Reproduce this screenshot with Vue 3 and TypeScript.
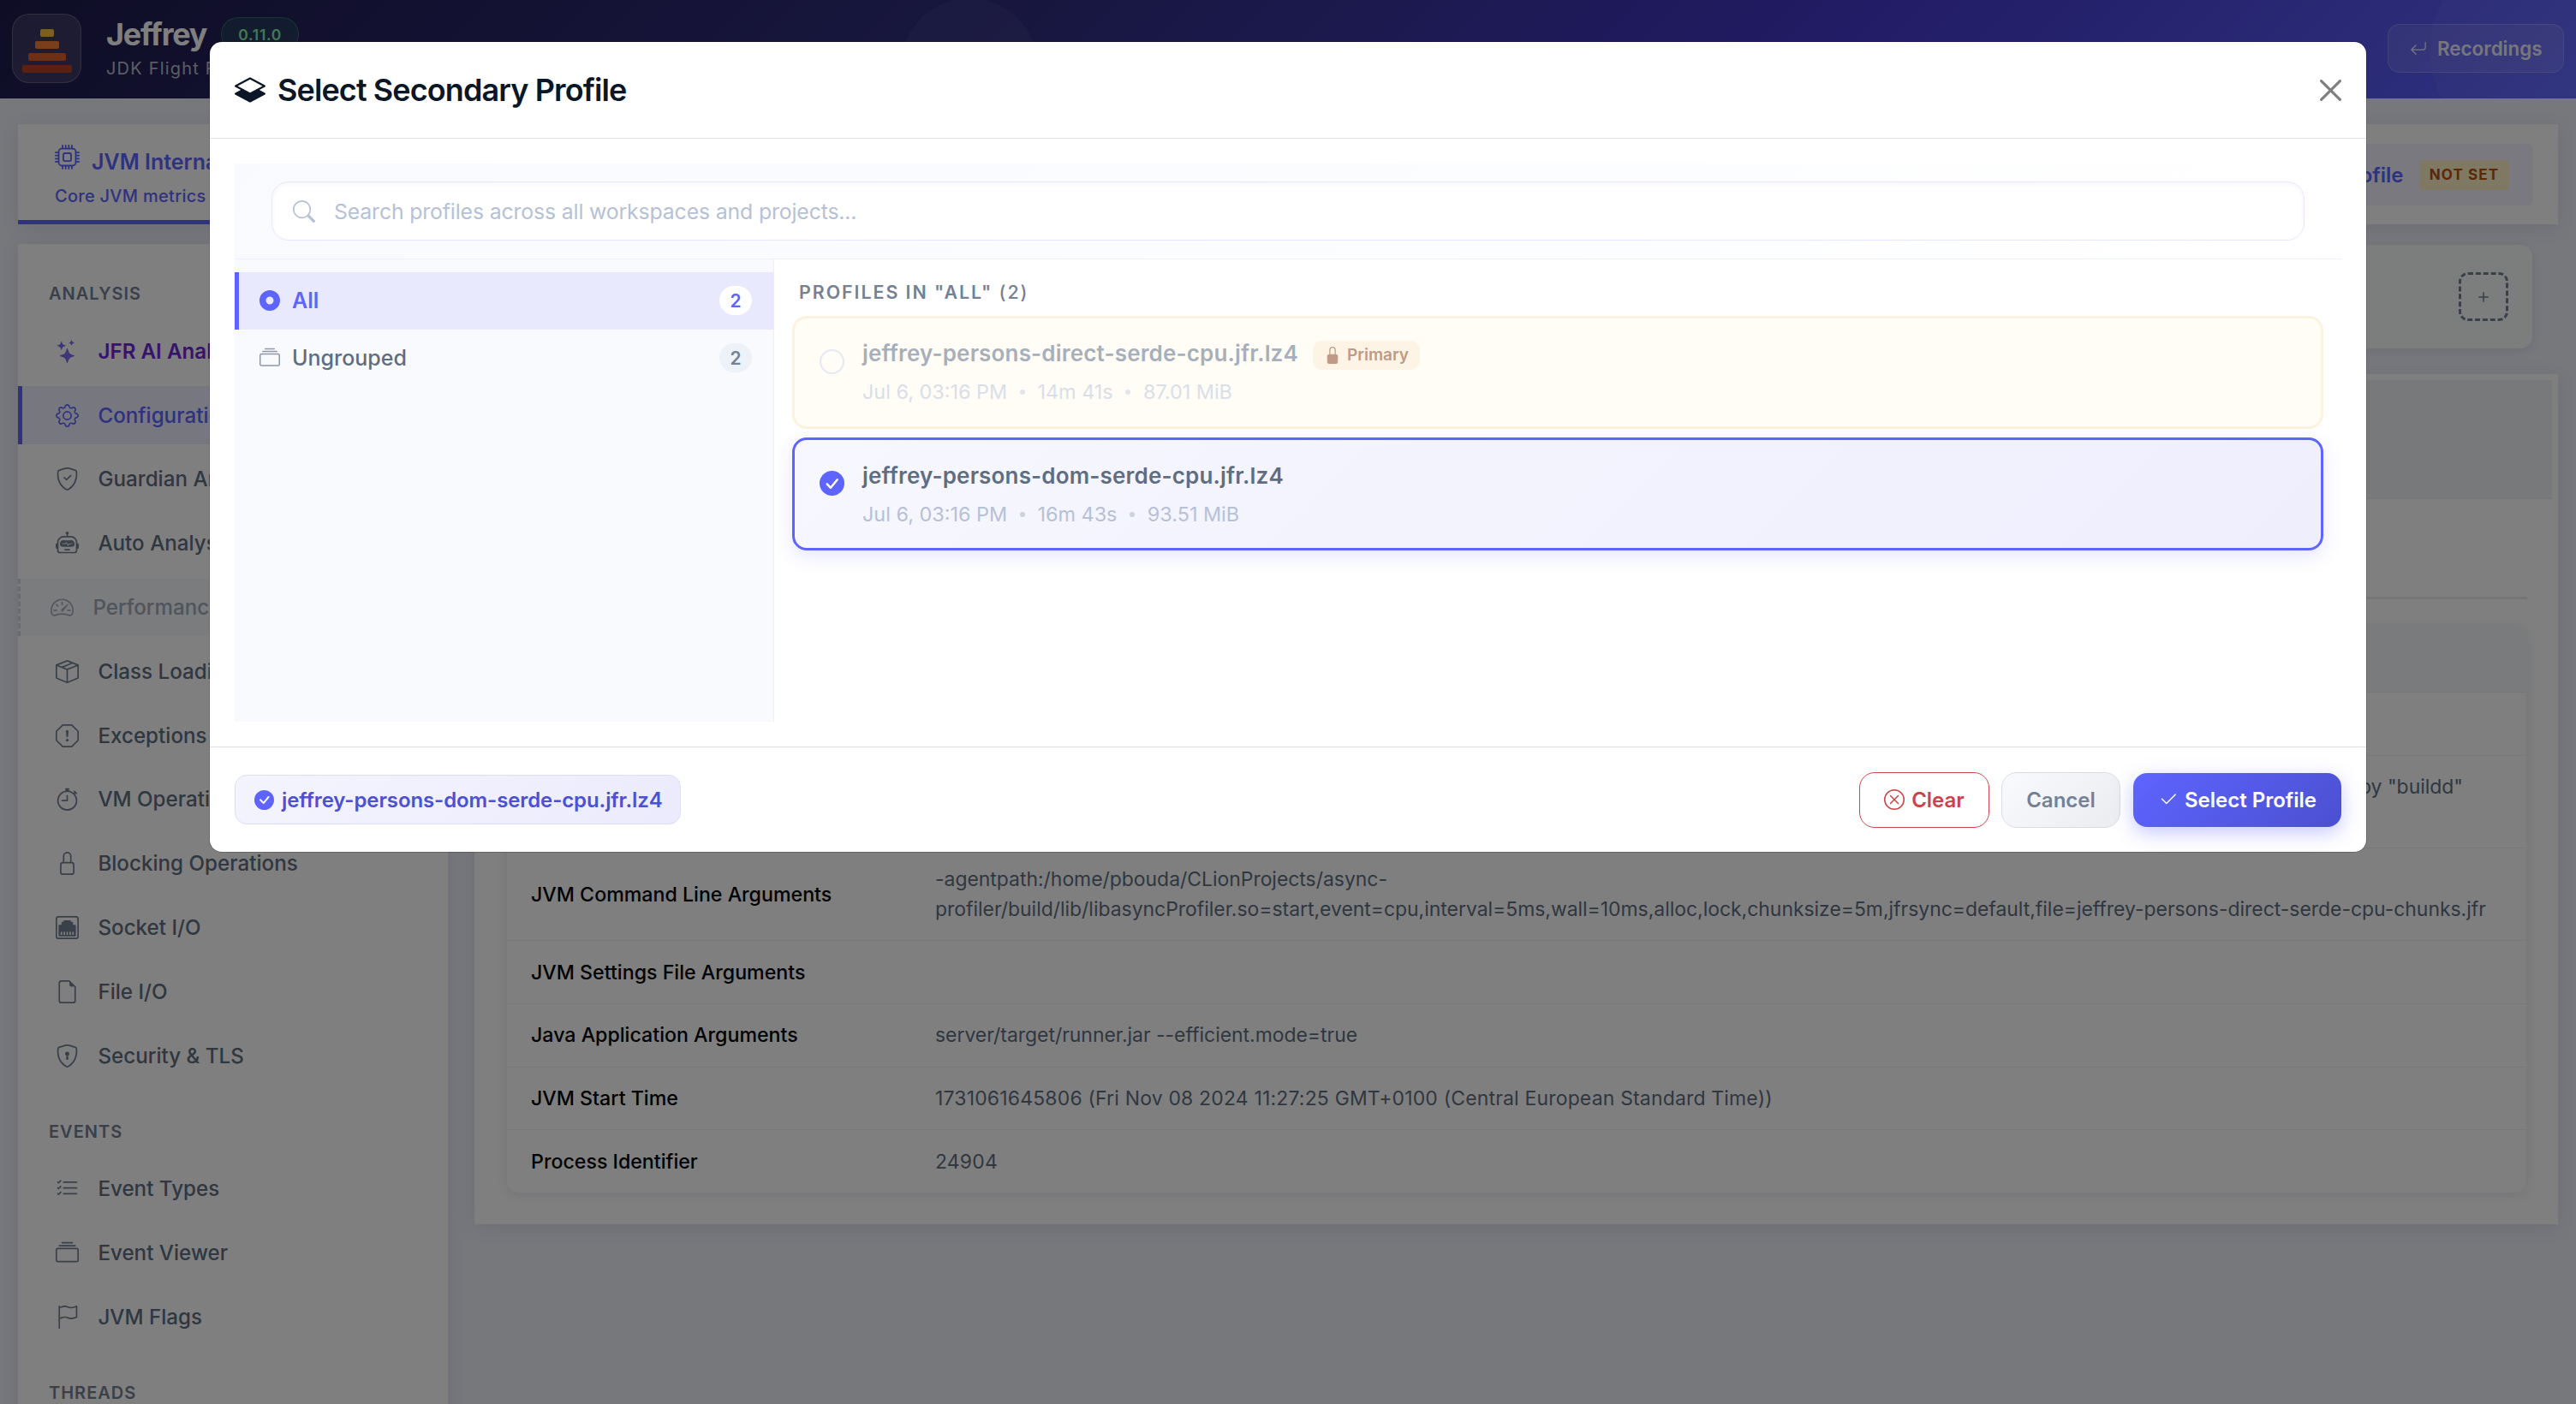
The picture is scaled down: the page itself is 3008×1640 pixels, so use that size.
<script setup lang="ts">
import { ref } from 'vue'

interface NavItem {
  label: string
  icon: string
  state?: 'ai' | 'active' | 'disabled'
}

interface NavGroup {
  title: string
  items: NavItem[]
}

interface Profile {
  name: string
  meta: string[]
  primary: boolean
  selected: boolean
}

const SHIELD =
  'M5.338 1.59a61 61 0 0 0-2.837.856.48.48 0 0 0-.328.39c-.554 4.157.726 7.19 2.253 9.188a10.7 10.7 0 0 0 2.287 2.233c.346.244.652.42.893.533q.18.085.293.118a1 1 0 0 0 .101.025 1 1 0 0 0 .1-.025q.114-.034.294-.118c.24-.113.547-.29.893-.533a10.7 10.7 0 0 0 2.287-2.233c1.527-1.997 2.807-5.031 2.253-9.188a.48.48 0 0 0-.328-.39c-.651-.213-1.75-.56-2.837-.855C9.552 1.29 8.531 1.067 8 1.067c-.53 0-1.552.223-2.662.524zM5.072.56C6.157.265 7.31 0 8 0s1.843.265 2.928.56c1.11.3 2.229.655 2.887.87a1.54 1.54 0 0 1 1.044 1.262c.596 4.477-.787 7.795-2.465 9.99a11.8 11.8 0 0 1-2.517 2.453 7 7 0 0 1-1.048.625c-.28.132-.581.24-.829.24s-.548-.108-.829-.24a7 7 0 0 1-1.048-.625 11.8 11.8 0 0 1-2.517-2.453C1.928 10.487.545 7.169 1.141 2.692A1.54 1.54 0 0 1 2.185 1.43 63 63 0 0 1 5.072.56'

const icons: Record<string, string[]> = {
  layers: [
    'M8.235 1.559a.5.5 0 0 0-.47 0l-7.5 4a.5.5 0 0 0 0 .882L3.188 8 .264 9.559a.5.5 0 0 0 0 .882l7.5 4a.5.5 0 0 0 .47 0l7.5-4a.5.5 0 0 0 0-.882L12.813 8l2.922-1.559a.5.5 0 0 0 0-.882zM8 9.433 1.562 6 8 2.567 14.438 6z',
  ],
  search: [
    'M11.742 10.344a6.5 6.5 0 1 0-1.397 1.398h-.001q.044.06.098.115l3.85 3.85a1 1 0 0 0 1.415-1.414l-3.85-3.85a1 1 0 0 0-.115-.1zM12 6.5a5.5 5.5 0 1 1-11 0 5.5 5.5 0 0 1 11 0',
  ],
  record: ['M16 8A8 8 0 1 1 0 8a8 8 0 0 1 16 0m-8 3a3 3 0 1 0 0-6 3 3 0 0 0 0 6'],
  collection: [
    'M2.5 3.5a.5.5 0 0 1 0-1h11a.5.5 0 0 1 0 1zm2-2a.5.5 0 0 1 0-1h7a.5.5 0 0 1 0 1zM0 13a1.5 1.5 0 0 0 1.5 1.5h13A1.5 1.5 0 0 0 16 13V6a1.5 1.5 0 0 0-1.5-1.5h-13A1.5 1.5 0 0 0 0 6zm1.5.5A.5.5 0 0 1 1 13V6a.5.5 0 0 1 .5-.5h13a.5.5 0 0 1 .5.5v7a.5.5 0 0 1-.5.5z',
  ],
  lockFill: [
    'M8 1a2 2 0 0 1 2 2v4H6V3a2 2 0 0 1 2-2m3 6V3a3 3 0 0 0-6 0v4a2 2 0 0 0-2 2v5a2 2 0 0 0 2 2h6a2 2 0 0 0 2-2V9a2 2 0 0 0-2-2',
  ],
  lock: [
    'M8 1a2 2 0 0 1 2 2v4H6V3a2 2 0 0 1 2-2m3 6V3a3 3 0 0 0-6 0v4a2 2 0 0 0-2 2v5a2 2 0 0 0 2 2h6a2 2 0 0 0 2-2V9a2 2 0 0 0-2-2M5 8h6a1 1 0 0 1 1 1v5a1 1 0 0 1-1 1H5a1 1 0 0 1-1-1V9a1 1 0 0 1 1-1',
  ],
  checkFill: [
    'M16 8A8 8 0 1 1 0 8a8 8 0 0 1 16 0m-3.97-3.03a.75.75 0 0 0-1.08.022L7.477 9.417 5.384 7.323a.75.75 0 0 0-1.06 1.06L6.97 11.03a.75.75 0 0 0 1.079-.02l3.992-4.99a.75.75 0 0 0-.01-1.05z',
  ],
  xCircle: [
    'M8 15A7 7 0 1 1 8 1a7 7 0 0 1 0 14m0 1A8 8 0 1 0 8 0a8 8 0 0 0 0 16',
    'M4.646 4.646a.5.5 0 0 1 .708 0L8 7.293l2.646-2.647a.5.5 0 0 1 .708.708L8.707 8l2.647 2.646a.5.5 0 0 1-.708.708L8 8.707l-2.646 2.647a.5.5 0 0 1-.708-.708L7.293 8 4.646 5.354a.5.5 0 0 1 0-.708',
  ],
  check: [
    'M13.854 3.646a.5.5 0 0 1 0 .708l-7 7a.5.5 0 0 1-.708 0l-3.5-3.5a.5.5 0 1 1 .708-.708L6.5 10.293l6.646-6.647a.5.5 0 0 1 .708 0',
  ],
  returnLeft: [
    'M14.5 1.5a.5.5 0 0 1 .5.5v4.8a2.5 2.5 0 0 1-2.5 2.5H2.707l3.347 3.346a.5.5 0 0 1-.708.708l-4.2-4.2a.5.5 0 0 1 0-.708l4-4a.5.5 0 1 1 .708.708L2.707 8.3H12.5A1.5 1.5 0 0 0 14 6.8V2a.5.5 0 0 1 .5-.5',
  ],
  close: [
    'M.293.293a1 1 0 0 1 1.414 0L8 6.586 14.293.293a1 1 0 1 1 1.414 1.414L9.414 8l6.293 6.293a1 1 0 0 1-1.414 1.414L8 9.414l-6.293 6.293a1 1 0 0 1-1.414-1.414L6.586 8 .293 1.707a1 1 0 0 1 0-1.414',
  ],
  plus: [
    'M8 4a.5.5 0 0 1 .5.5v3h3a.5.5 0 0 1 0 1h-3v3a.5.5 0 0 1-1 0v-3h-3a.5.5 0 0 1 0-1h3v-3A.5.5 0 0 1 8 4',
  ],
  cpu: [
    'M5 0a.5.5 0 0 1 .5.5V2h1V.5a.5.5 0 0 1 1 0V2h1V.5a.5.5 0 0 1 1 0V2h1V.5a.5.5 0 0 1 1 0V2A2.5 2.5 0 0 1 14 4.5h1.5a.5.5 0 0 1 0 1H14v1h1.5a.5.5 0 0 1 0 1H14v1h1.5a.5.5 0 0 1 0 1H14v1h1.5a.5.5 0 0 1 0 1H14a2.5 2.5 0 0 1-2.5 2.5v1.5a.5.5 0 0 1-1 0V14h-1v1.5a.5.5 0 0 1-1 0V14h-1v1.5a.5.5 0 0 1-1 0V14h-1v1.5a.5.5 0 0 1-1 0V14A2.5 2.5 0 0 1 2 11.5H.5a.5.5 0 0 1 0-1H2v-1H.5a.5.5 0 0 1 0-1H2v-1H.5a.5.5 0 0 1 0-1H2v-1H.5a.5.5 0 0 1 0-1H2A2.5 2.5 0 0 1 4.5 2V.5A.5.5 0 0 1 5 0m-.5 3A1.5 1.5 0 0 0 3 4.5v7A1.5 1.5 0 0 0 4.5 13h7a1.5 1.5 0 0 0 1.5-1.5v-7A1.5 1.5 0 0 0 11.5 3zM5 6.5A1.5 1.5 0 0 1 6.5 5h3A1.5 1.5 0 0 1 11 6.5v3A1.5 1.5 0 0 1 9.5 11h-3A1.5 1.5 0 0 1 5 9.5zM6.5 6a.5.5 0 0 0-.5.5v3a.5.5 0 0 0 .5.5h3a.5.5 0 0 0 .5-.5v-3a.5.5 0 0 0-.5-.5z',
  ],
  stars: [
    'M7.657 6.247c.11-.33.576-.33.686 0l.645 1.937a2.89 2.89 0 0 0 1.829 1.828l1.936.645c.33.11.33.576 0 .686l-1.937.645a2.89 2.89 0 0 0-1.828 1.829l-.645 1.936a.361.361 0 0 1-.686 0l-.645-1.937a2.89 2.89 0 0 0-1.828-1.828l-1.937-.645a.361.361 0 0 1 0-.686l1.937-.645a2.89 2.89 0 0 0 1.828-1.828zM3.794 1.148a.217.217 0 0 1 .412 0l.387 1.162c.173.518.579.924 1.097 1.097l1.162.387a.217.217 0 0 1 0 .412l-1.162.387A1.73 1.73 0 0 0 4.593 5.69l-.387 1.162a.217.217 0 0 1-.412 0L3.407 5.69A1.73 1.73 0 0 0 2.31 4.593l-1.162-.387a.217.217 0 0 1 0-.412l1.162-.387A1.73 1.73 0 0 0 3.407 2.31zM10.863.099a.145.145 0 0 1 .274 0l.258.774c.115.346.386.617.732.732l.774.258a.145.145 0 0 1 0 .274l-.774.258a1.16 1.16 0 0 0-.732.732l-.258.774a.145.145 0 0 1-.274 0l-.258-.774a1.16 1.16 0 0 0-.732-.732L9.1 2.137a.145.145 0 0 1 0-.274l.774-.258c.346-.115.617-.386.732-.732z',
  ],
  gear: [
    'M8 4.754a3.246 3.246 0 1 0 0 6.492 3.246 3.246 0 0 0 0-6.492M5.754 8a2.246 2.246 0 1 1 4.492 0 2.246 2.246 0 0 1-4.492 0',
    'M9.796 1.343c-.527-1.79-3.065-1.79-3.592 0l-.094.319a.873.873 0 0 1-1.255.52l-.292-.16c-1.64-.892-3.433.902-2.54 2.541l.159.292a.873.873 0 0 1-.52 1.255l-.319.094c-1.79.527-1.79 3.065 0 3.592l.319.094a.873.873 0 0 1 .52 1.255l-.16.292c-.892 1.64.901 3.434 2.541 2.54l.292-.159a.873.873 0 0 1 1.255.52l.094.319c.527 1.79 3.065 1.79 3.592 0l.094-.319a.873.873 0 0 1 1.255-.52l.292.16c1.64.893 3.434-.902 2.54-2.541l-.159-.292a.873.873 0 0 1 .52-1.255l.319-.094c1.79-.527 1.79-3.065 0-3.592l-.319-.094a.873.873 0 0 1-.52-1.255l.16-.292c.893-1.64-.902-3.433-2.541-2.54l-.292.159a.873.873 0 0 1-1.255-.52zm-2.633.283c.246-.835 1.428-.835 1.674 0l.094.319a1.873 1.873 0 0 0 2.693 1.115l.291-.16c.764-.415 1.6.42 1.184 1.185l-.159.292a1.873 1.873 0 0 0 1.116 2.692l.318.094c.835.246.835 1.428 0 1.674l-.319.094a1.873 1.873 0 0 0-1.115 2.693l.16.291c.415.764-.42 1.6-1.185 1.184l-.291-.159a1.873 1.873 0 0 0-2.693 1.116l-.094.318c-.246.835-1.428.835-1.674 0l-.094-.319a1.873 1.873 0 0 0-2.692-1.115l-.292.16c-.764.415-1.6-.42-1.184-1.185l.159-.291A1.873 1.873 0 0 0 1.945 8.93l-.319-.094c-.835-.246-.835-1.428 0-1.674l.319-.094A1.873 1.873 0 0 0 3.06 4.377l-.16-.292c-.415-.764.42-1.6 1.185-1.184l.292.159a1.873 1.873 0 0 0 2.692-1.115z',
  ],
  shieldCheck: [
    SHIELD,
    'M10.854 5.146a.5.5 0 0 1 0 .708l-3 3a.5.5 0 0 1-.708 0l-1.5-1.5a.5.5 0 1 1 .708-.708L7.5 7.793l2.646-2.647a.5.5 0 0 1 .708 0',
  ],
  shieldLock: [
    SHIELD,
    'M9.5 6.5a1.5 1.5 0 0 1-1 1.415l.385 1.99a.5.5 0 0 1-.491.595h-.788a.5.5 0 0 1-.49-.595l.384-1.99a1.5 1.5 0 1 1 2-1.415',
  ],
  robot: [
    'M6 12.5a.5.5 0 0 1 .5-.5h3a.5.5 0 0 1 0 1h-3a.5.5 0 0 1-.5-.5M3 8.062C3 6.76 4.235 5.765 5.53 5.886a26.6 26.6 0 0 0 4.94 0C11.765 5.765 13 6.76 13 8.062v1.157a.93.93 0 0 1-.765.935c-.845.147-2.34.346-4.235.346s-3.39-.2-4.235-.346A.93.93 0 0 1 3 9.219zm4.542-.827a.25.25 0 0 0-.217.068l-.92.9a25 25 0 0 1-1.871-.183.25.25 0 0 0-.068.495c.55.076 1.232.149 2.02.193a.25.25 0 0 0 .189-.071l.754-.736.847 1.71a.25.25 0 0 0 .404.062l.932-.97a25 25 0 0 0 1.922-.188.25.25 0 0 0-.068-.495c-.538.074-1.207.145-1.98.189a.25.25 0 0 0-.166.076l-.754.785-.842-1.7a.25.25 0 0 0-.182-.135',
    'M8.5 1.866a1 1 0 1 0-1 0V3h-2A4.5 4.5 0 0 0 1 7.5V8a1 1 0 0 0-1 1v2a1 1 0 0 0 1 1v1a2 2 0 0 0 2 2h10a2 2 0 0 0 2-2v-1a1 1 0 0 0 1-1V9a1 1 0 0 0-1-1v-.5A4.5 4.5 0 0 0 10.5 3h-2zM14 7.5V13a1 1 0 0 1-1 1H3a1 1 0 0 1-1-1V7.5A3.5 3.5 0 0 1 5.5 4h5A3.5 3.5 0 0 1 14 7.5',
  ],
  speedometer: [
    'M8 4a.5.5 0 0 1 .5.5V6a.5.5 0 0 1-1 0V4.5A.5.5 0 0 1 8 4M3.732 5.732a.5.5 0 0 1 .707 0l.915.914a.5.5 0 1 1-.708.708l-.914-.915a.5.5 0 0 1 0-.707M2 10a.5.5 0 0 1 .5-.5h1.586a.5.5 0 0 1 0 1H2.5A.5.5 0 0 1 2 10m9.5 0a.5.5 0 0 1 .5-.5h1.5a.5.5 0 0 1 0 1H12a.5.5 0 0 1-.5-.5m.754-4.246a.39.39 0 0 0-.527-.02L7.547 9.31a.91.91 0 1 0 1.302 1.258l3.434-4.297a.39.39 0 0 0-.029-.518z',
    'M0 10a8 8 0 1 1 15.547 2.661c-.442 1.253-1.845 1.602-2.932 1.25C11.309 13.488 9.475 13 8 13c-1.474 0-3.31.488-4.615.911-1.087.352-2.49.003-2.932-1.25A8 8 0 0 1 0 10m8-7a7 7 0 0 0-6.603 9.329c.203.575.923.876 1.68.63C4.397 12.533 6.358 12 8 12s3.604.532 4.923.96c.757.245 1.477-.056 1.68-.631A7 7 0 0 0 8 3',
  ],
  box: [
    'M8.186 1.113a.5.5 0 0 0-.372 0L1.846 3.5l2.404.961L10.404 2zm3.564 1.426L5.596 5 8 5.961 14.154 3.5zm3.25 1.7-6.5 2.6v7.922l6.5-2.6V4.24zM7.5 14.762V6.838L1 4.239v7.923zM7.443.184a1.5 1.5 0 0 1 1.114 0l7.129 2.852A.5.5 0 0 1 16 3.5v8.662a1 1 0 0 1-.629.928l-7.185 2.874a.5.5 0 0 1-.372 0L.63 13.09a1 1 0 0 1-.63-.928V3.5a.5.5 0 0 1 .314-.464z',
  ],
  octagon: [
    'M4.54.146A.5.5 0 0 1 4.893 0h6.214a.5.5 0 0 1 .353.146l4.394 4.394a.5.5 0 0 1 .146.353v6.214a.5.5 0 0 1-.146.353l-4.394 4.394a.5.5 0 0 1-.353.146H4.893a.5.5 0 0 1-.353-.146L.146 11.46A.5.5 0 0 1 0 11.107V4.893a.5.5 0 0 1 .146-.353zM5.1 1 1 5.1v5.8L5.1 15h5.8l4.1-4.1V5.1L10.9 1z',
    'M7.002 11a1 1 0 1 1 2 0 1 1 0 0 1-2 0M7.1 4.995a.905.905 0 1 1 1.8 0l-.35 3.507a.552.552 0 0 1-1.1 0z',
  ],
  stopwatch: [
    'M8.5 5.6a.5.5 0 1 0-1 0v2.9h-3a.5.5 0 0 0 0 1H8a.5.5 0 0 0 .5-.5z',
    'M6.5 1A.5.5 0 0 1 7 .5h2a.5.5 0 0 1 0 1v.57c1.36.196 2.594.78 3.584 1.64l.012-.013.354-.354-.354-.353a.5.5 0 0 1 .707-.708l1.414 1.415a.5.5 0 1 1-.707.707l-.353-.354-.354.354-.013.012A7 7 0 1 1 7 2.071V1.5a.5.5 0 0 1-.5-.5M8 3a6 6 0 1 0 .001 12A6 6 0 0 0 8 3',
  ],
  ethernet: [
    'M14 13.5v-7a.5.5 0 0 0-.5-.5H12V4.5a.5.5 0 0 0-.5-.5h-1v-.5A.5.5 0 0 0 10 3H6a.5.5 0 0 0-.5.5V4h-1a.5.5 0 0 0-.5.5V6H2.5a.5.5 0 0 0-.5.5v7a.5.5 0 0 0 .5.5h11a.5.5 0 0 0 .5-.5M3.5 11h1v2h-1zm2 0h1v2h-1zm2 0h1v2h-1zm2 0h1v2h-1zm2 0h1v2h-1z',
    'M2 0a2 2 0 0 0-2 2v12a2 2 0 0 0 2 2h12a2 2 0 0 0 2-2V2a2 2 0 0 0-2-2zM1 2a1 1 0 0 1 1-1h12a1 1 0 0 1 1 1v12a1 1 0 0 1-1 1H2a1 1 0 0 1-1-1z',
  ],
  file: [
    'M14 4.5V14a2 2 0 0 1-2 2H4a2 2 0 0 1-2-2V2a2 2 0 0 1 2-2h5.5zm-3 0A1.5 1.5 0 0 1 9.5 3V1H4a1 1 0 0 0-1 1v12a1 1 0 0 0 1 1h8a1 1 0 0 0 1-1V4.5z',
  ],
  listCheck: [
    'M5 11.5a.5.5 0 0 1 .5-.5h9a.5.5 0 0 1 0 1h-9a.5.5 0 0 1-.5-.5m0-4a.5.5 0 0 1 .5-.5h9a.5.5 0 0 1 0 1h-9a.5.5 0 0 1-.5-.5m0-4a.5.5 0 0 1 .5-.5h9a.5.5 0 0 1 0 1h-9a.5.5 0 0 1-.5-.5M3.854 2.146a.5.5 0 0 1 0 .708l-1.5 1.5a.5.5 0 0 1-.708 0l-.5-.5a.5.5 0 1 1 .708-.708L2 3.293l1.146-1.147a.5.5 0 0 1 .708 0m0 4a.5.5 0 0 1 0 .708l-1.5 1.5a.5.5 0 0 1-.708 0l-.5-.5a.5.5 0 1 1 .708-.708L2 7.293l1.146-1.147a.5.5 0 0 1 .708 0m0 4a.5.5 0 0 1 0 .708l-1.5 1.5a.5.5 0 0 1-.708 0l-.5-.5a.5.5 0 0 1 .708-.708l.146.147 1.146-1.147a.5.5 0 0 1 .708 0',
  ],
  flag: [
    'M14.778.085A.5.5 0 0 1 15 .5V8a.5.5 0 0 1-.314.464L14.5 8l.186.464-.003.001-.006.003-.023.009a12 12 0 0 1-.397.15c-.264.095-.631.223-1.047.35-.816.252-1.879.523-2.71.523-.847 0-1.548-.28-2.158-.525l-.028-.01C7.68 8.71 7.14 8.5 6.5 8.5c-.7 0-1.638.23-2.437.477A20 20 0 0 0 3 9.342V15.5a.5.5 0 0 1-1 0V.5a.5.5 0 0 1 1 0v.282c.226-.079.496-.17.79-.26C4.606.272 5.67 0 6.5 0c.84 0 1.524.277 2.121.519l.043.018C9.286.788 9.828 1 10.5 1c.7 0 1.638-.23 2.437-.477a20 20 0 0 0 1.349-.476l.019-.007.004-.002h.001M14 1.221c-.22.078-.48.167-.766.255-.81.252-1.872.523-2.734.523-.886 0-1.592-.286-2.203-.534l-.008-.003C7.662 1.21 7.139 1 6.5 1c-.669 0-1.606.229-2.415.478A21 21 0 0 0 3 1.845v6.433c.22-.078.48-.167.766-.255C4.576 7.77 5.638 7.5 6.5 7.5c.847 0 1.548.28 2.158.525l.028.01C9.32 8.29 9.86 8.5 10.5 8.5c.668 0 1.606-.229 2.415-.478A21 21 0 0 0 14 7.655V1.222z',
  ],
}

const groups: NavGroup[] = [
  {
    title: 'ANALYSIS',
    items: [
      { label: 'JFR AI Analysis', icon: 'stars', state: 'ai' },
      { label: 'Configuration', icon: 'gear', state: 'active' },
      { label: 'Guardian Analysis', icon: 'shieldCheck' },
      { label: 'Auto Analysis', icon: 'robot' },
      { label: 'Performance Counters', icon: 'speedometer', state: 'disabled' },
      { label: 'Class Loading', icon: 'box' },
      { label: 'Exceptions', icon: 'octagon' },
      { label: 'VM Operations', icon: 'stopwatch' },
      { label: 'Blocking Operations', icon: 'lock' },
      { label: 'Socket I/O', icon: 'ethernet' },
      { label: 'File I/O', icon: 'file' },
      { label: 'Security & TLS', icon: 'shieldLock' },
    ],
  },
  {
    title: 'EVENTS',
    items: [
      { label: 'Event Types', icon: 'listCheck' },
      { label: 'Event Viewer', icon: 'collection' },
      { label: 'JVM Flags', icon: 'flag' },
    ],
  },
  { title: 'THREADS', items: [] },
]

const profiles = ref<Profile[]>([
  {
    name: 'jeffrey-persons-direct-serde-cpu.jfr.lz4',
    meta: ['Jul 6, 03:16 PM', '14m 41s', '87.01 MiB'],
    primary: true,
    selected: false,
  },
  {
    name: 'jeffrey-persons-dom-serde-cpu.jfr.lz4',
    meta: ['Jul 6, 03:16 PM', '16m 43s', '93.51 MiB'],
    primary: false,
    selected: true,
  },
])

const folders = [
  { label: 'All', icon: 'record', count: 2, active: true },
  { label: 'Ungrouped', icon: 'collection', count: 2, active: false },
]

const rows = [
  { key: 'JVM Settings File Arguments', value: '' },
  { key: 'Java Application Arguments', value: 'server/target/runner.jar --efficient.mode=true' },
  {
    key: 'JVM Start Time',
    value: '1731061645806 (Fri Nov 08 2024 11:27:25 GMT+0100 (Central European Standard Time))',
    numeric: true,
  },
  { key: 'Process Identifier', value: '24904', numeric: true },
]
</script>

<template>
  <div class="page">
    <header class="topbar">
      <i class="bubble bubble-a"></i>
      <i class="bubble bubble-b"></i>
      <div class="logo"><i class="b1"></i><i class="b2"></i><i class="b3"></i><i class="b4"></i></div>
      <div class="brand">
        <div class="brand-line"><span class="brand-name">Jeffrey</span><span class="version">0.11.0</span></div>
        <div class="brand-sub">JDK Flight Recorder</div>
      </div>
      <button class="recordings">
        <svg viewBox="0 0 16 16"><path v-for="d in icons.returnLeft" :key="d" :d="d" /></svg>
        <span>Recordings</span>
      </button>
    </header>

    <section class="tabs">
      <div class="tab">
        <div class="tab-title">
          <svg viewBox="0 0 16 16"><path v-for="d in icons.cpu" :key="d" :d="d" fill-rule="evenodd" /></svg>
          <span>JVM Internals</span>
        </div>
        <div class="tab-sub">Core JVM metrics</div>
      </div>
      <div class="secondary"><span class="secondary-label">Secondary Profile</span><span class="not-set">NOT SET</span></div>
    </section>

    <div class="columns">
      <aside class="sidebar">
        <div v-for="g in groups" :key="g.title" class="group">
          <div class="group-title">{{ g.title }}</div>
          <div v-for="item in g.items" :key="item.label" class="nav" :class="item.state">
            <svg viewBox="0 0 16 16"><path v-for="d in icons[item.icon]" :key="d" :d="d" /></svg>
            <span>{{ item.label }}</span>
          </div>
        </div>
      </aside>

      <main class="content">
        <div class="toolbar">
          <div class="add"><svg viewBox="0 0 16 16"><path v-for="d in icons.plus" :key="d" :d="d" /></svg></div>
        </div>
        <div class="card">
          <div class="card-head"></div>
          <div class="card-line"></div>
          <div class="table">
            <div class="t-head"></div>
            <div class="row"></div>
            <div class="row tall"><div class="key"></div><div class="val first-line">by "buildd"</div></div>
            <div class="row tall">
              <div class="key">JVM Command Line Arguments</div>
              <div class="val">
                -agentpath:/home/pbouda/CLionProjects/async-<br />profiler/build/lib/libasyncProfiler.so=start,event=cpu,interval=5ms,wall=10ms,alloc,lock,chunksize=5m,jfrsync=default,file=jeffrey-persons-direct-serde-cpu-chunks.jfr
              </div>
            </div>
            <div v-for="r in rows" :key="r.key" class="row">
              <div class="key">{{ r.key }}</div>
              <div class="val" :class="{ numeric: r.numeric }">{{ r.value }}</div>
            </div>
          </div>
        </div>
      </main>
    </div>

    <div class="backdrop"></div>

    <div class="modal">
      <div class="m-head">
        <svg class="m-icon" viewBox="0 0 16 16"><path v-for="d in icons.layers" :key="d" :d="d" /></svg>
        <span class="m-title">Select Secondary Profile</span>
        <svg class="m-close" viewBox="0 0 16 16"><path v-for="d in icons.close" :key="d" :d="d" /></svg>
      </div>
      <div class="m-body">
        <div class="search-panel">
          <div class="search">
            <svg viewBox="0 0 16 16"><path v-for="d in icons.search" :key="d" :d="d" /></svg>
            <span>Search profiles across all workspaces and projects...</span>
          </div>
        </div>
        <div class="split">
          <div class="folders">
            <div v-for="f in folders" :key="f.label" class="folder" :class="{ on: f.active }">
              <svg viewBox="0 0 16 16"><path v-for="d in icons[f.icon]" :key="d" :d="d" /></svg>
              <span class="folder-name">{{ f.label }}</span>
              <span class="count">{{ f.count }}</span>
            </div>
          </div>
          <div class="list">
            <div class="list-title">PROFILES IN "ALL" <span>(2)</span></div>
            <div
              v-for="p in profiles"
              :key="p.name"
              class="profile"
              :class="{ primary: p.primary, selected: p.selected }"
            >
              <span class="radio">
                <svg v-if="p.selected" viewBox="0 0 28 28"><path d="M8.4 14.8l4.1 4.3L20 9.9" /></svg>
              </span>
              <div class="info">
                <div class="name">
                  <span>{{ p.name }}</span>
                  <span v-if="p.primary" class="badge">
                    <svg viewBox="0 0 16 16"><path v-for="d in icons.lockFill" :key="d" :d="d" /></svg>Primary
                  </span>
                </div>
                <div class="meta">
                  <template v-for="(m, i) in p.meta" :key="m">
                    <i v-if="i > 0" class="dot"></i><span>{{ m }}</span>
                  </template>
                </div>
              </div>
            </div>
          </div>
        </div>
      </div>
      <div class="m-foot">
        <div class="chip">
          <svg viewBox="0 0 16 16"><path v-for="d in icons.checkFill" :key="d" :d="d" /></svg>
          <span>jeffrey-persons-dom-serde-cpu.jfr.lz4</span>
        </div>
        <div class="actions">
          <button class="btn clear">
            <svg viewBox="0 0 16 16"><path v-for="d in icons.xCircle" :key="d" :d="d" /></svg><span>Clear</span>
          </button>
          <button class="btn cancel"><span>Cancel</span></button>
          <button class="btn select">
            <svg viewBox="0 0 16 16"><path v-for="d in icons.check" :key="d" :d="d" /></svg><span>Select Profile</span>
          </button>
        </div>
      </div>
    </div>
  </div>
</template>

<style>
body {
  margin: 0;
}
</style>

<style scoped>
.page {
  position: relative;
  width: 3008px;
  height: 1640px;
  overflow: hidden;
  background: #eff1f9;
  font-family: Inter, 'Liberation Sans', sans-serif;
  color: #5e6e82;
}
.page *,
.page *::before {
  box-sizing: border-box;
}
svg {
  display: block;
  flex: none;
  fill: currentColor;
}
button {
  font-family: inherit;
  margin: 0;
}
span {
  white-space: nowrap;
}

/* top bar */
.topbar {
  position: relative;
  height: 115px;
  overflow: hidden;
  display: flex;
  align-items: flex-start;
  padding: 16px 14px 0;
  background: linear-gradient(135deg, #1e1b4b 0%, #312e81 40%, #4338ca 70%, #5e64ff 100%);
}
.bubble {
  position: absolute;
  border-radius: 50%;
  background: rgba(255, 255, 255, 0.04);
}
.bubble-a {
  left: 1052px;
  top: -2px;
  width: 160px;
  height: 160px;
}
.bubble-b {
  left: 2838px;
  top: -70px;
  width: 260px;
  height: 260px;
}
.logo {
  position: relative;
  width: 81px;
  height: 81px;
  border-radius: 20px;
  border: 1px solid rgba(255, 255, 255, 0.2);
  background: rgba(255, 255, 255, 0.12);
  display: flex;
  flex-direction: column;
  align-items: center;
  gap: 5px;
  padding-top: 17px;
}
.logo i {
  height: 9px;
  border-radius: 2px;
}
.b1 {
  width: 16px;
  background: #fabf38;
}
.b2 {
  width: 28px;
  background: #f27f34;
}
.b3 {
  width: 44px;
  background: #da5f2a;
}
.b4 {
  width: 58px;
  background: #b44222;
}
.brand {
  margin-left: 29px;
}
.brand-line {
  display: flex;
  align-items: center;
  height: 48px;
}
.brand-name {
  font-size: 36px;
  line-height: 48px;
  font-weight: 700;
  letter-spacing: -1.25px;
  color: #fff;
}
.version {
  margin-left: 17px;
  width: 91px;
  height: 40px;
  border-radius: 20px;
  border: 1px solid rgba(74, 222, 128, 0.3);
  background: rgba(74, 222, 128, 0.12);
  color: #86efac;
  font-size: 17.5px;
  font-weight: 600;
  letter-spacing: 0.7px;
  display: flex;
  align-items: center;
  justify-content: center;
}
.brand-sub {
  font-size: 20px;
  line-height: 32px;
  letter-spacing: 1.2px;
  color: rgba(255, 255, 255, 0.7);
  white-space: nowrap;
}
.recordings {
  margin-left: auto;
  margin-top: 12px;
  width: 206px;
  height: 57px;
  border-radius: 14px;
  border: 1px solid rgba(255, 255, 255, 0.2);
  background: rgba(255, 255, 255, 0.1);
  color: rgba(255, 255, 255, 0.9);
  display: flex;
  align-items: center;
  padding: 0 0 0 25px;
  font-size: 22.4px;
  font-weight: 600;
}
.recordings svg {
  width: 20px;
  height: 20px;
  margin-right: 12px;
}

/* mode tabs */
.tabs {
  margin: 30px 21px 0;
  height: 117px;
  background: #fff;
  box-shadow: 0 4px 24px rgba(60, 70, 110, 0.12);
  display: flex;
  justify-content: space-between;
}
.tab {
  width: 420px;
  border-bottom: 5px solid #5e64ff;
  color: #5e64ff;
  padding: 24px 0 0 43px;
}
.tab-title {
  display: flex;
  font-size: 25px;
  line-height: 40px;
  font-weight: 600;
}
.tab-title svg {
  width: 29px;
  height: 29px;
  margin-right: 14px;
}
.tab-sub {
  margin-top: 4px;
  font-size: 20px;
  line-height: 32px;
  font-weight: 500;
  letter-spacing: 0.28px;
}
.secondary {
  margin: 23px 29px 0 0;
  width: 420px;
  height: 72px;
  border-radius: 6px;
  background: #f3f2fe;
  display: flex;
  align-items: center;
  justify-content: flex-end;
  padding-right: 28px;
}
.secondary-label {
  color: #5e64ff;
  font-size: 24px;
  font-weight: 600;
}
.not-set {
  margin-left: 18.5px;
  width: 105px;
  height: 35px;
  border-radius: 4px;
  background: #fef0c7;
  color: #b45309;
  font-size: 17px;
  line-height: 35px;
  font-weight: 700;
  letter-spacing: 1.1px;
  text-align: center;
}

/* page columns */
.columns {
  display: flex;
  align-items: flex-start;
  padding: 23px 21px 0;
  gap: 31px;
}
.sidebar {
  width: 502px;
  height: 1500px;
  flex: none;
  padding-top: 44.3px;
  background: #fff;
  box-shadow: 0 4px 24px rgba(60, 70, 110, 0.12);
}
.group {
  margin-bottom: 40.8px;
}
.group-title {
  padding-left: 36px;
  margin-bottom: 19px;
  font-size: 20px;
  line-height: 28px;
  font-weight: 600;
  letter-spacing: 1px;
  color: #748194;
}
.nav {
  height: 67.8px;
  margin-bottom: 7.03px;
  display: flex;
  align-items: center;
  padding-left: 44px;
  font-size: 24.2px;
  font-weight: 500;
}
.nav svg {
  width: 27px;
  height: 27px;
  margin-right: 22.4px;
  color: #748194;
}
.nav.ai {
  font-weight: 600;
  color: #6d28d9;
}
.nav.ai svg {
  color: #7a6cf0;
}
.nav.active {
  background: #eeeefe;
  border-left: 5px solid #5e64ff;
  padding-left: 39px;
  color: #5e64ff;
}
.nav.active svg {
  color: #5e64ff;
}
.nav.disabled {
  background: #f7f9fc;
  border-left: 3px dashed #d4d5e0;
  padding-left: 35px;
  color: #a2a8b6;
}
.nav.disabled svg {
  color: #a8adba;
}

.content {
  flex: 1;
}
.toolbar {
  margin: 1px 30px 0 0;
  height: 121px;
  border-radius: 14px;
  background: #f9fafb;
  box-shadow: 0 3px 12px rgba(60, 70, 110, 0.12);
  display: flex;
  align-items: center;
  justify-content: flex-end;
  padding-right: 28px;
}
.add {
  width: 58px;
  height: 57px;
  border: 3px dashed #748194;
  border-radius: 11px;
  color: #748194;
  display: flex;
  align-items: center;
  justify-content: center;
}
.add svg {
  width: 24px;
  height: 24px;
}
.card {
  margin-top: 30px;
  height: 993px;
  background: #fff;
  box-shadow: 0 4px 24px rgba(60, 70, 110, 0.12);
  padding: 7px 7px 0;
}
.card-head {
  height: 139px;
  background: linear-gradient(135deg, #f8f9fa, #eff2f6);
  border-bottom: 1px solid #e4ebf5;
}
.card-line {
  margin: 114px 29px 0 30px;
  height: 3px;
  background: #e9eaec;
}
.table {
  margin: 29px 29px 0 30px;
  height: 665px;
  border: 1px solid #f0f2f5;
  border-radius: 14px;
  overflow: hidden;
  box-shadow: 0 3px 14px rgba(60, 70, 110, 0.1);
}
.t-head {
  height: 79px;
  background: #f5f7fa;
  border-bottom: 1px solid #e8edf3;
}
.row {
  height: 73.6px;
  padding-top: 1.4px;
  display: flex;
  align-items: center;
  border-bottom: 1px solid #eef0f3;
  line-height: 35px;
}
.row:last-child {
  border-bottom: 0;
}
.row.tall {
  height: 108.4px;
}
.key {
  width: 500px;
  flex: none;
  padding-left: 28px;
  font-size: 23.2px;
  font-weight: 500;
  color: #000;
}
.val {
  white-space: nowrap;
  font-size: 22.92px;
}
.val.numeric {
  letter-spacing: 0.21px;
}
.first-line {
  width: 1784px;
  height: 70px;
  text-align: right;
}

.backdrop {
  position: absolute;
  inset: 0;
  background: rgba(0, 0, 0, 0.5);
}

/* dialog */
.modal {
  position: absolute;
  left: 245px;
  top: 49px;
  width: 2518px;
  height: 946px;
  border-radius: 14px;
  background: #fff;
  box-shadow: 0 0 0 1px rgba(0, 0, 0, 0.18);
}
.m-head {
  height: 113px;
  border-bottom: 1px solid #dfe0e3;
  padding: 0 29px;
  display: flex;
  align-items: center;
}
.m-icon {
  width: 36px;
  height: 36px;
  color: #0b1727;
}
.m-title {
  margin-left: 14px;
  font-size: 36px;
  font-weight: 600;
  letter-spacing: -0.9px;
  color: #0b1727;
}
.m-close {
  width: 25px;
  height: 25px;
  margin-left: auto;
  color: #7f7f7f;
}
.m-body {
  padding: 29px 29px 0;
  height: 710px;
}
.search-panel {
  height: 112px;
  padding: 21px 43px 0;
  border-bottom: 1px solid #efeefb;
  background: linear-gradient(135deg, #f8fafe 0%, #ffffff 100%);
}
.search {
  height: 69px;
  border: 1px solid #e9e7fd;
  border-radius: 20px;
  background: #fff;
  box-shadow: inset 0 2px 6px rgba(0, 0, 0, 0.04);
  display: flex;
  align-items: center;
  padding-left: 24px;
  font-size: 24.8px;
  letter-spacing: -0.14px;
  color: #b6c1d6;
}
.search svg {
  width: 26px;
  height: 26px;
  margin-right: 22px;
}
.split {
  display: flex;
  height: 540px;
}
.folders {
  width: 630px;
  flex: none;
  padding-top: 15px;
  background: #f9fafe;
  border-right: 1px solid #edeefb;
}
.folder {
  height: 67px;
  border-left: 5px solid transparent;
  padding: 0 25px 1px 24px;
  display: flex;
  align-items: center;
  font-size: 25px;
  font-weight: 500;
  color: #5e6e82;
}
.folder svg {
  width: 24px;
  height: 24px;
  margin-right: 14px;
  color: #8e99aa;
}
.folder-name {
  flex: 1;
}
.count {
  width: 38px;
  height: 34px;
  border-radius: 17px;
  background: #edf2f9;
  color: #748194;
  font-size: 21px;
  line-height: 35px;
  font-weight: 600;
  text-align: center;
}
.folder.on {
  background: #e8e9fc;
  border-left-color: #5e64ff;
  color: #5e64ff;
  font-weight: 600;
}
.folder.on svg {
  color: #5e64ff;
}
.folder.on .count {
  background: #fff;
  color: #5e64ff;
}
.list {
  flex: 1;
  padding: 22px 21px 0;
}
.list-title {
  padding-left: 8px;
  height: 44px;
  font-size: 21.4px;
  line-height: 33px;
  font-weight: 600;
  letter-spacing: 1.95px;
  color: #748194;
}
.list-title span {
  font-weight: 500;
}
.profile {
  height: 132px;
  border: 3px solid #e5e9f2;
  border-radius: 17px;
  margin-bottom: 10px;
  padding: 0 29px;
  display: flex;
}
.profile.primary {
  border-color: #fdf2dd;
  background: #fffdf6;
}
.profile.selected {
  border-color: #5e64ff;
  background: linear-gradient(135deg, #f7f7ff, #eeeefd);
  box-shadow: 0 7px 22px rgba(94, 100, 255, 0.16);
}
.radio {
  width: 29px;
  height: 29px;
  margin-top: 36px;
  border: 2px solid #e5e9f3;
  border-radius: 50%;
  flex: none;
}
.selected .radio {
  border: 0;
  background: #5e64ff;
}
.radio svg {
  width: 29px;
  height: 29px;
  fill: none;
  stroke: #fff;
  stroke-width: 2.4;
  stroke-linecap: round;
  stroke-linejoin: round;
}
.info {
  margin-left: 21px;
}
.name {
  margin-top: 23px;
  height: 36px;
  display: flex;
  align-items: center;
  font-size: 26px;
  font-weight: 600;
  letter-spacing: 0.17px;
  color: #5e6e82;
}
.primary .name {
  margin-top: 22px;
  height: 37px;
  color: #a7afbb;
}
.badge {
  margin-left: 17px;
  margin-top: 4px;
  width: 125px;
  height: 34px;
  border-radius: 11px;
  background: #fdf4e5;
  color: #c09a84;
  display: flex;
  align-items: center;
  padding-left: 13px;
  font-size: 19px;
  letter-spacing: 0;
}
.badge svg {
  width: 20px;
  height: 20px;
  margin-right: 7px;
}
.meta {
  margin-top: 11px;
  display: flex;
  align-items: center;
  font-size: 23.4px;
  line-height: 34px;
  color: #b6c1d6;
}
.primary .meta {
  margin-top: 9.5px;
  color: #d9dfe9;
}
.dot {
  width: 6px;
  height: 6px;
  margin: 0 14.7px;
  border-radius: 50%;
  background: #ccd2dc;
}
.primary .dot {
  background: #e2e6ea;
}

.m-foot {
  height: 123px;
  border-top: 1px solid #dcdfe5;
  padding: 0 29px;
  display: flex;
  align-items: center;
  justify-content: space-between;
}
.chip {
  height: 58px;
  width: 521px;
  border: 1px solid #dcdcfa;
  border-radius: 14px;
  background: linear-gradient(135deg, #f4f4fe, #ebebfd);
  display: flex;
  align-items: center;
  padding-left: 22px;
  font-size: 24px;
  font-weight: 600;
  letter-spacing: -0.1px;
  color: #4b50d6;
}
.chip svg {
  width: 23px;
  height: 23px;
  margin-right: 9px;
  color: #5e64ff;
}
.actions {
  display: flex;
  align-items: center;
}
.btn {
  height: 65px;
  border-radius: 18px;
  padding: 0;
  display: flex;
  align-items: center;
  justify-content: center;
  font-size: 24px;
  font-weight: 600;
}
.btn svg {
  width: 24px;
  height: 24px;
}
.clear {
  width: 152px;
  border: 1px solid #d2434a;
  background: #fff;
  color: #cc4247;
}
.clear svg {
  margin-right: 8px;
}
.cancel {
  width: 139px;
  margin-left: 14px;
  border: 1px solid #d9dce3;
  background: linear-gradient(135deg, #f9fafd, #ebecf0);
  color: #748194;
}
.select {
  width: 243px;
  height: 63px;
  margin-left: 15px;
  border: 0;
  border-radius: 16px;
  background: linear-gradient(135deg, #5e64ff, #4b50d0);
  box-shadow: 0 7px 22px rgba(94, 100, 255, 0.35);
  color: #fff;
}
.select svg {
  margin-right: 7px;
}
</style>
